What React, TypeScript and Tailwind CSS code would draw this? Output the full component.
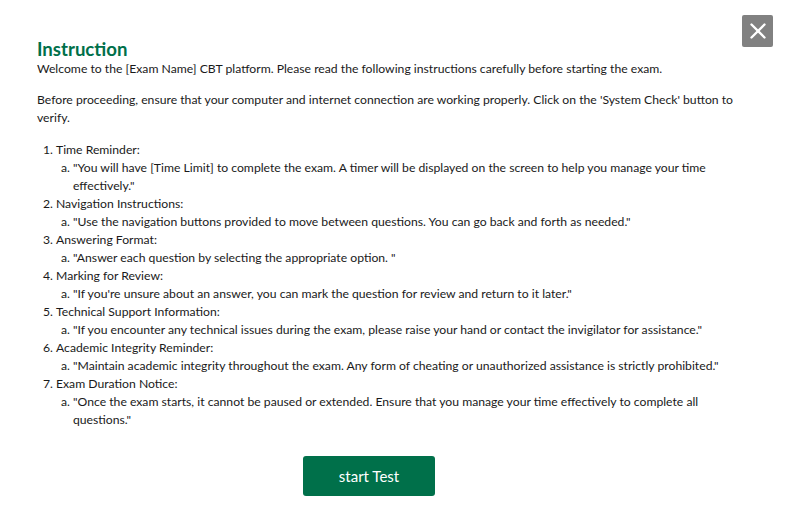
import { X } from 'lucide-react'

const items = [
  {
    title: 'Time Reminder:',
    note: '"You will have [Time Limit] to complete the exam. A timer will be displayed on the screen to help you manage your time effectively."',
  },
  {
    title: 'Navigation Instructions:',
    note: '"Use the navigation buttons provided to move between questions. You can go back and forth as needed."',
  },
  {
    title: 'Answering Format:',
    note: '"Answer each question by selecting the appropriate option. "',
  },
  {
    title: 'Marking for Review:',
    note: '"If you\'re unsure about an answer, you can mark the question for review and return to it later."',
  },
  {
    title: 'Technical Support Information:',
    note: '"If you encounter any technical issues during the exam, please raise your hand or contact the invigilator for assistance."',
  },
  {
    title: 'Academic Integrity Reminder:',
    note: '"Maintain academic integrity throughout the exam. Any form of cheating or unauthorized assistance is strictly prohibited."',
  },
  {
    title: 'Exam Duration Notice:',
    note: '"Once the exam starts, it cannot be paused or extended. Ensure that you manage your time effectively to complete all questions."',
  },
]

export default function App() {
  return (
    <div className="relative min-h-screen bg-white text-[#1a1a1a] font-['Lato','Open_Sans',sans-serif]">
      <button
        type="button"
        className="absolute top-[15px] right-[22px] flex h-[32px] w-[31px] items-center justify-center rounded-[2px] bg-[#818181] text-white"
      >
        <X size={26} strokeWidth={2.2} />
      </button>

      <div className="pl-[37px] pr-[50px] pt-[38px]">
        <h1 className="text-[18.6px] font-bold leading-[22px] text-[#00704a]">Instruction</h1>
        <p className="text-[12.2px] leading-[18px]">
          Welcome to the [Exam Name] CBT platform. Please read the following instructions carefully before starting the exam.
        </p>
        <p className="mt-[13px] text-[12.2px] leading-[18px]">
          Before proceeding, ensure that your computer and internet connection are working properly. Click on the 'System Check' button to verify.
        </p>

        <ol className="mt-[14px] list-decimal pl-[19px] text-[12.2px] leading-[18px]">
          {items.map((item) => (
            <li key={item.title}>
              {item.title}
              <ol className="list-[lower-alpha] pl-[17px]">
                <li>{item.note}</li>
              </ol>
            </li>
          ))}
        </ol>

        <button
          type="button"
          className="ml-[266px] mt-[27px] h-[40px] w-[132px] rounded-[3px] bg-[#00704a] text-[15px] text-white"
        >
          start Test
        </button>
      </div>
    </div>
  )
}
